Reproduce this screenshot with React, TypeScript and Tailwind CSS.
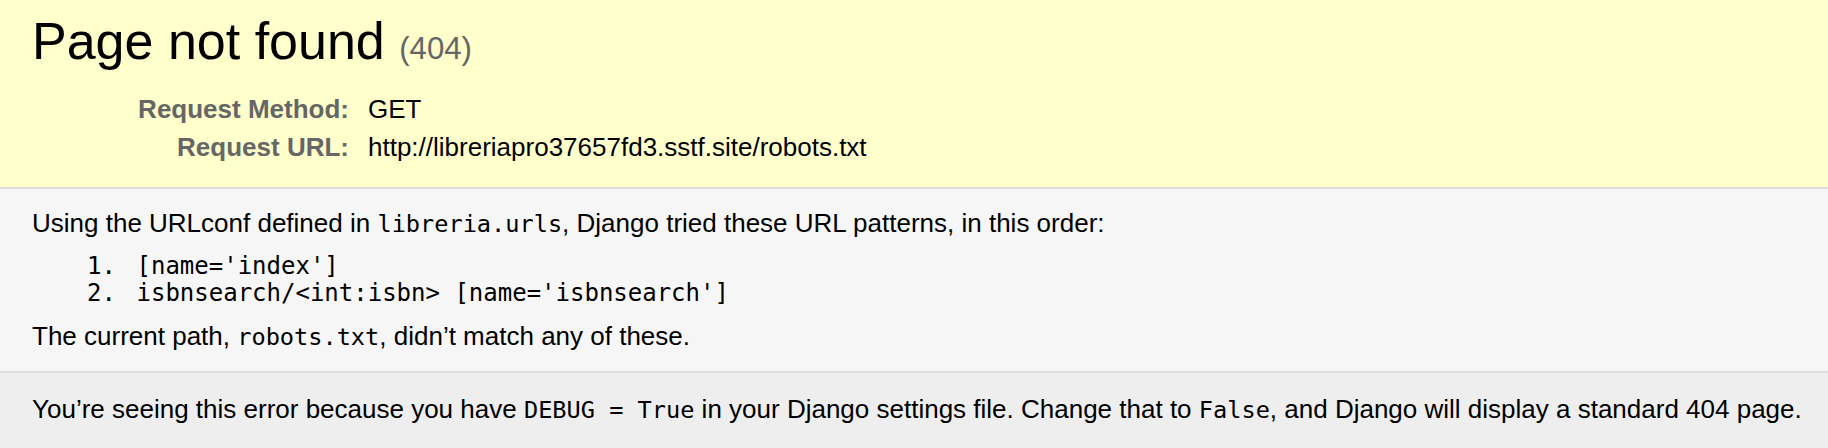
export default function App() {
  return (
    <div className="min-h-screen bg-[#eee] text-black font-['Liberation_Sans',Arial,Helvetica,sans-serif] text-[26px]">
      <header className="bg-[#ffc] border-b-2 border-[#ddd] px-[32px] pt-[11px] pb-[21px]">
        <h1 className="text-[52px] leading-[60px] font-normal">
          Page not found <small className="text-[31.2px] leading-none text-[#666] font-normal">(404)</small>
        </h1>
        <div className="mt-[19px]">
          <div className="flex py-[4px] leading-[30px]">
            <span className="w-[330px] shrink-0 pr-[13px] text-right font-bold text-[#666]">Request Method:</span>
            <span className="pl-[6px]">GET</span>
          </div>
          <div className="flex py-[4px] leading-[30px]">
            <span className="w-[330px] shrink-0 pr-[13px] text-right font-bold text-[#666]">Request URL:</span>
            <span className="pl-[6px]">http://libreriapro37657fd3.sstf.site/robots.txt</span>
          </div>
        </div>
      </header>
      <main className="bg-[#f6f6f6] border-b-2 border-[#ddd] px-[32px] pt-[19px] pb-[20px]">
        <p className="leading-[30px] whitespace-nowrap">
          Using the URLconf defined in{" "}
          <code className="font-['DejaVu_Sans_Mono',monospace] text-[23.6px] leading-none">libreria.urls</code>, Django
          tried these URL patterns, in this order:
        </p>
        <ol className="mt-[14.5px] font-['DejaVu_Sans_Mono',monospace] text-[24px]">
          <li className="flex leading-[27px]">
            <span className="w-[84px] shrink-0 text-right">1.</span>
            <span className="ml-[20.5px] whitespace-pre">[name='index']</span>
          </li>
          <li className="flex leading-[27px]">
            <span className="w-[84px] shrink-0 text-right">2.</span>
            <span className="ml-[20.5px] whitespace-pre">isbnsearch/&lt;int:isbn&gt; [name='isbnsearch']</span>
          </li>
        </ol>
        <p className="mt-[14.5px] leading-[30px] whitespace-nowrap">
          The current path,{" "}
          <code className="font-['DejaVu_Sans_Mono',monospace] text-[23.6px] leading-none">robots.txt</code>, didn’t match
          any of these.
        </p>
      </main>
      <footer className="px-[32px] pt-[21px] pb-[16px]">
        <p className="leading-[30px] whitespace-nowrap">
          You’re seeing this error because you have{" "}
          <code className="font-['DejaVu_Sans_Mono',monospace] text-[23.6px] leading-none">DEBUG = True</code> in your
          Django settings file. Change that to{" "}
          <code className="font-['DejaVu_Sans_Mono',monospace] text-[23.6px] leading-none">False</code>, and Django will
          display a standard 404 page.
        </p>
      </footer>
    </div>
  );
}
